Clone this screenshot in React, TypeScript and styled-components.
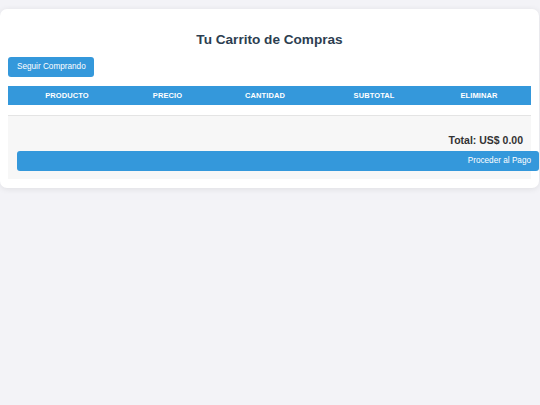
import React from "react";
import styled, { createGlobalStyle } from "styled-components";

const GlobalStyle = createGlobalStyle`
  html, body {
    margin: 0;
    padding: 0;
    background: #f3f3f7;
    font-family: "Liberation Sans", Arial, Helvetica, sans-serif;
  }
  * { box-sizing: border-box; }
`;

const Page = styled.div`
  min-height: 405px;
  padding-top: 9px;
`;

const Card = styled.section`
  width: 539px;
  background: #ffffff;
  border-radius: 7px;
  box-shadow: 0 1px 6px rgba(0, 0, 0, 0.09);
  padding: 22px 8px 9px 8px;
`;

const Title = styled.h1`
  margin: 0;
  text-align: center;
  font-size: 13.6px;
  line-height: 17px;
  font-weight: 700;
  color: #2c3e50;
`;

const Button = styled.button<{ $wide?: boolean }>`
  display: block;
  border: none;
  background: #3498db;
  color: #ffffff;
  font-family: inherit;
  font-size: 8.2px;
  line-height: 20px;
  height: 20px;
  border-radius: 3px;
  padding: 0 8px 0 9px;
  cursor: pointer;
  ${(p) =>
    p.$wide
      ? `
    box-sizing: content-box;
    width: 100%;
    padding: 0 8px;
    text-align: right;
  `
      : ""}
`;

const Toolbar = styled.div`
  margin-top: 9px;
`;

const Table = styled.div`
  margin-top: 9px;
`;

const HeaderRow = styled.div`
  display: grid;
  grid-template-columns: 118px 83px 112px 106px 1fr;
  height: 19px;
  align-items: center;
  background: #3498db;
`;

const HeaderCell = styled.div`
  text-align: center;
  color: #ffffff;
  font-size: 7.5px;
  font-weight: 700;
  letter-spacing: 0.1px;
`;

const EmptyBody = styled.div`
  height: 11px;
  border-bottom: 1px solid #e4e4e4;
`;

const Summary = styled.div`
  background: #f7f7f7;
  padding: 9px 8px 8px 9px;
`;

const Total = styled.div`
  text-align: right;
  font-size: 10.5px;
  line-height: 12px;
  font-weight: 700;
  color: #333333;
  margin: 9px 0 5px;
`;

const columns = ["PRODUCTO", "PRECIO", "CANTIDAD", "SUBTOTAL", "ELIMINAR"];

export default function App() {
  return (
    <>
      <GlobalStyle />
      <Page>
        <Card>
          <Title>Tu Carrito de Compras</Title>
          <Toolbar>
            <Button>Seguir Comprando</Button>
          </Toolbar>
          <Table>
            <HeaderRow>
              {columns.map((c) => (
                <HeaderCell key={c}>{c}</HeaderCell>
              ))}
            </HeaderRow>
            <EmptyBody />
          </Table>
          <Summary>
            <Total>Total: US$ 0.00</Total>
            <Button $wide>Proceder al Pago</Button>
          </Summary>
        </Card>
      </Page>
    </>
  );
}
